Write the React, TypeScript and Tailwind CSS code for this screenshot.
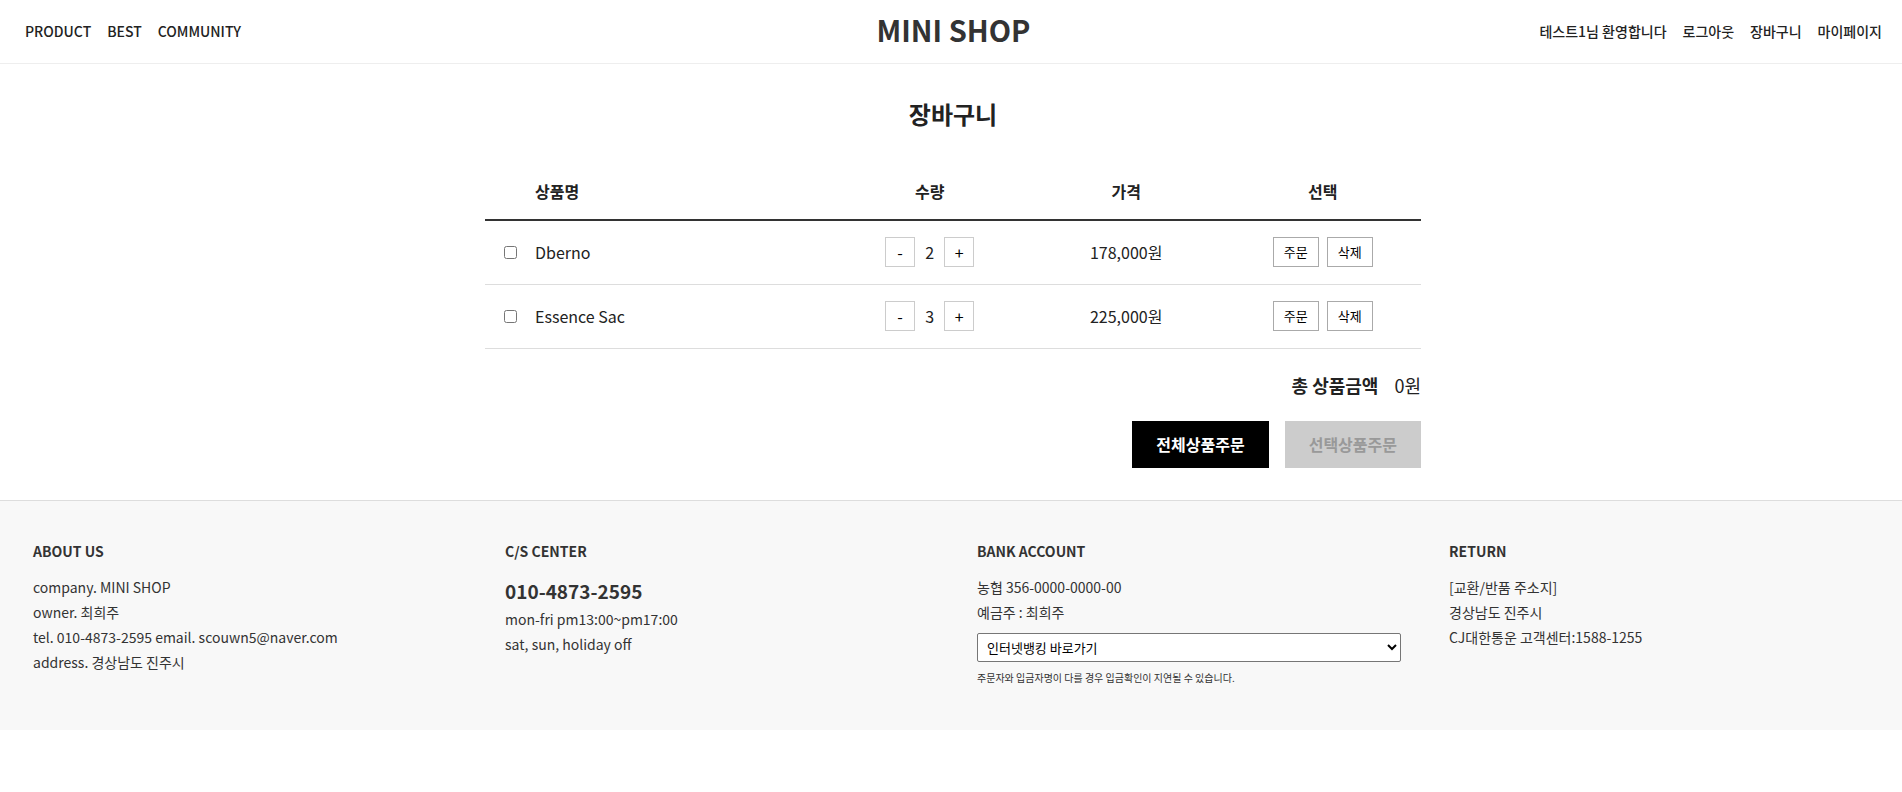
import { useState } from "react";

type Item = { id: number; name: string; price: number; count: number };

const initialItems: Item[] = [
  { id: 1, name: "Dberno", price: 89000, count: 2 },
  { id: 2, name: "Essence Sac", price: 75000, count: 3 },
];

const won = (value: number) => `${value.toLocaleString("en-US")}원`;

function Header() {
  return (
    <header className="grid h-16 grid-cols-[1fr_auto_1fr] items-center border-b border-[#eeeeee] pr-5 pb-[2px] pl-[25px] text-sm font-medium">
      <nav className="flex gap-4">
        <a href="#product">PRODUCT</a>
        <a href="#best">BEST</a>
        <a href="#community">COMMUNITY</a>
      </nav>
      <a href="#home" className="pb-1 text-[29px] leading-9 font-bold text-[#333333]">
        MINI SHOP
      </a>
      <div className="flex justify-end gap-4">
        <span>테스트1님 환영합니다</span>
        <button type="button">로그아웃</button>
        <a href="#cart">장바구니</a>
        <a href="#mypage">마이페이지</a>
      </div>
    </header>
  );
}

function StepButton({ label, text, onClick }: { label: string; text: string; onClick: () => void }) {
  return (
    <button type="button" aria-label={label} onClick={onClick} className="size-[30px] border border-[#cccccc] text-base leading-6 text-black">
      {text}
    </button>
  );
}

function SmallButton({ text }: { text: string }) {
  return (
    <button type="button" className="h-[30px] border border-[#aaaaaa] px-[10px] text-[13px] leading-5 text-black">
      {text}
    </button>
  );
}

function Cart() {
  const [items, setItems] = useState(initialItems);
  const [checked, setChecked] = useState<number[]>([]);

  const step = (id: number, by: number) =>
    setItems(items.map((i) => (i.id === id ? { ...i, count: Math.max(1, i.count + by) } : i)));
  const toggle = (id: number) =>
    setChecked(checked.includes(id) ? checked.filter((c) => c !== id) : [...checked, id]);
  const total = items.filter((i) => checked.includes(i.id)).reduce((sum, i) => sum + i.price * i.count, 0);

  return (
    <main className="mx-auto w-full max-w-[940px] pt-8 pb-8 pl-1">
      <h1 className="text-center text-2xl leading-9 font-bold">장바구니</h1>
      <table className="mt-9 w-full table-fixed border-collapse text-center">
        <colgroup>
          <col className="w-[50px]" />
          <col />
          <col className="w-[21%]" />
          <col className="w-[21%]" />
          <col className="w-[21%]" />
        </colgroup>
        <thead>
          <tr className="h-[52px] border-b-2 border-[#333333] align-top">
            <td></td>
            <th scope="col" className="pt-[11px] text-left font-bold">상품명</th>
            <th scope="col" className="pt-[11px] font-bold">수량</th>
            <th scope="col" className="pt-[11px] font-bold">가격</th>
            <th scope="col" className="pt-[11px] font-bold">선택</th>
          </tr>
        </thead>
        <tbody>
          {items.map((item) => (
            <tr key={item.id} className="h-16 border-b border-[#dddddd]">
              <td>
                <input
                  type="checkbox"
                  aria-label={item.name}
                  checked={checked.includes(item.id)}
                  onChange={() => toggle(item.id)}
                  className="mx-auto block size-[13px]"
                />
              </td>
              <td className="text-left">{item.name}</td>
              <td>
                <div className="flex items-center justify-center">
                  <StepButton label="수량 감소" text="-" onClick={() => step(item.id, -1)} />
                  <span className="w-[29px]">{item.count}</span>
                  <StepButton label="수량 증가" text="+" onClick={() => step(item.id, 1)} />
                </div>
              </td>
              <td>{won(item.price * item.count)}</td>
              <td>
                <div className="flex justify-center gap-2">
                  <SmallButton text="주문" />
                  <SmallButton text="삭제" />
                </div>
              </td>
            </tr>
          ))}
        </tbody>
      </table>
      <div className="mt-[22px] flex justify-end gap-4 text-lg leading-7">
        <strong className="font-bold">총 상품금액</strong>
        <span>{won(total)}</span>
      </div>
      <div className="mt-[22px] flex justify-end gap-4">
        <button type="button" className="h-[47px] bg-black px-6 font-bold text-white">
          전체상품주문
        </button>
        <button
          type="button"
          disabled={checked.length === 0}
          className="h-[47px] bg-black px-6 font-bold text-white disabled:bg-[#cccccc] disabled:text-[#999999]"
        >
          선택상품주문
        </button>
      </div>
    </main>
  );
}

function Footer() {
  return (
    <footer className="grid grid-cols-4 gap-12 border-t border-[#dddddd] bg-[#f8f8f8] pt-[38px] pr-[29px] pb-10 pl-[33px] text-sm leading-[25px] text-[#333333]">
      <section>
        <h2 className="mb-3 leading-6 font-bold">ABOUT US</h2>
        <p>company. MINI SHOP</p>
        <p>owner. 최희주</p>
        <p>tel. 010-4873-2595 email. scouwn5@naver.com</p>
        <p>address. 경상남도 진주시</p>
      </section>
      <section>
        <h2 className="mb-3 leading-6 font-bold">C/S CENTER</h2>
        <p className="text-[19px] leading-8 font-bold">010-4873-2595</p>
        <p>mon-fri pm13:00~pm17:00</p>
        <p>sat, sun, holiday off</p>
      </section>
      <section>
        <h2 className="mb-3 leading-6 font-bold">BANK ACCOUNT</h2>
        <p>농협 356-0000-0000-00</p>
        <p>예금주 : 최희주</p>
        <select
          aria-label="인터넷뱅킹 바로가기"
          className="mt-2 block h-[29px] w-full rounded-[2px] border border-[#767676] bg-white px-[5px] text-[13px] text-black"
        >
          <option>인터넷뱅킹 바로가기</option>
          <option>농협</option>
        </select>
        <p className="mt-1 text-[10px] leading-6">주문자와 입금자명이 다를 경우 입금확인이 지연될 수 있습니다.</p>
      </section>
      <section>
        <h2 className="mb-3 leading-6 font-bold">RETURN</h2>
        <p>[교환/반품 주소지]</p>
        <p>경상남도 진주시</p>
        <p>CJ대한통운 고객센터:1588-1255</p>
      </section>
    </footer>
  );
}

export default function App() {
  return (
    <div className="bg-white font-['Noto_Sans_CJK_KR','Noto_Sans',sans-serif] text-base text-[#222222]">
      <Header />
      <Cart />
      <Footer />
    </div>
  );
}
